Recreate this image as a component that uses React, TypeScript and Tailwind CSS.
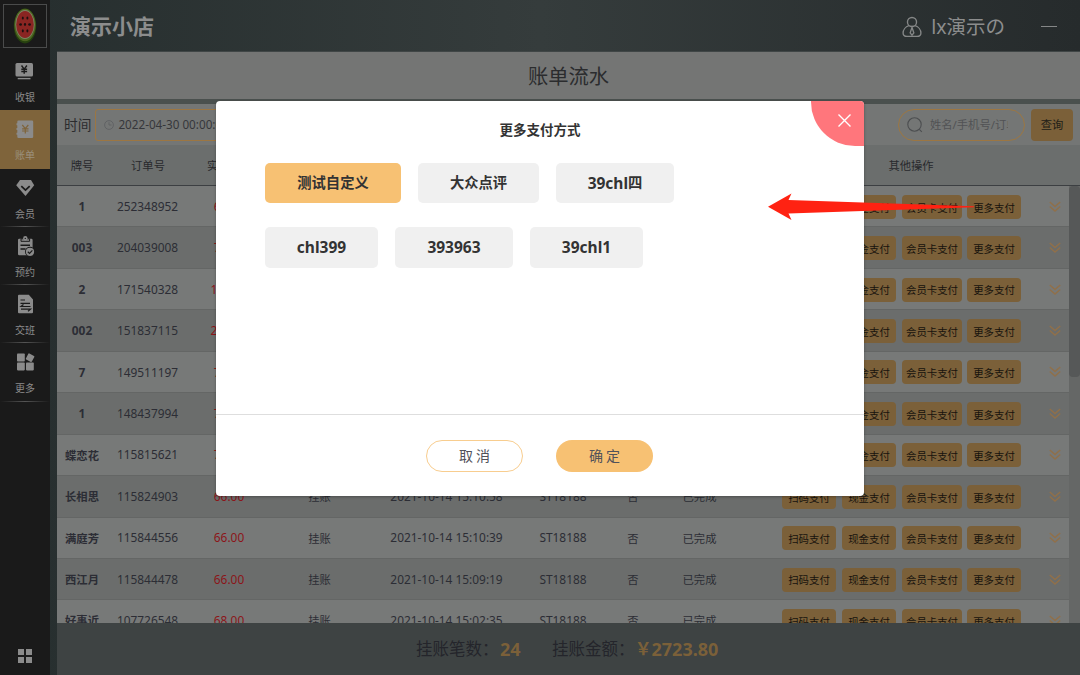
import type { ReactNode } from "react";

type Order = {
  tag: string;
  no: string;
  amount: string;
  time: string;
};

const orders: Order[] = [
  { tag: "1", no: "252348952", amount: "66.00", time: "2022-04-28 16:20:11" },
  { tag: "003", no: "204039008", amount: "78.00", time: "2022-01-18 11:02:45" },
  { tag: "2", no: "171540328", amount: "128.00", time: "2021-12-20 14:31:09" },
  { tag: "002", no: "151837115", amount: "238.00", time: "2021-11-26 10:12:52" },
  { tag: "7", no: "149511197", amount: "78.00", time: "2021-11-24 15:40:23" },
  { tag: "1", no: "148437994", amount: "78.00", time: "2021-11-23 09:27:36" },
  { tag: "蝶恋花", no: "115815621", amount: "78.00", time: "2021-10-14 15:11:20" },
  { tag: "长相思", no: "115824903", amount: "66.00", time: "2021-10-14 15:10:58" },
  { tag: "满庭芳", no: "115844556", amount: "66.00", time: "2021-10-14 15:10:39" },
  { tag: "西江月", no: "115844478", amount: "66.00", time: "2021-10-14 15:09:19" },
  { tag: "好事近", no: "107726548", amount: "68.00", time: "2021-10-14 15:02:35" },
];

const cols = "grid grid-cols-[50px_82px_79px_103px_151px_82px_58px_75px_1fr] items-center";

function Melon() {
  return (
    <svg width="24" height="36" viewBox="0 0 24 36">
      <ellipse cx="12" cy="18" rx="11.2" ry="17.5" fill="#25400f" />
      <ellipse cx="12" cy="17" rx="10.6" ry="16.3" fill="#4c6620" />
      <ellipse cx="12" cy="16.5" rx="9.6" ry="14.6" fill="#7c8365" />
      <ellipse cx="12" cy="16.5" rx="8.8" ry="13.4" fill="#8a2522" />
      <g fill="#1c1010">
        <ellipse cx="9.8" cy="10" rx="1" ry="1.6" />
        <ellipse cx="14.4" cy="10" rx="1" ry="1.6" />
        <ellipse cx="7.6" cy="16.5" rx="1.4" ry="1.3" />
        <ellipse cx="12" cy="16.5" rx="1.1" ry="1.4" />
        <ellipse cx="16.6" cy="16.5" rx="1.4" ry="1.3" />
        <ellipse cx="9.8" cy="22.8" rx="1" ry="1.6" />
        <ellipse cx="14.4" cy="22.8" rx="1" ry="1.6" />
      </g>
    </svg>
  );
}

const icons: Record<string, ReactNode> = {
  cash: (
    <svg width="20" height="20" viewBox="0 0 20 20">
      <rect x=".5" y="2" width="17.5" height="13.5" rx="1.5" fill="#8b8b8b" />
      <path d="M2.700 17.6h12.8" stroke="#8b8b8b" strokeWidth="1.4" />
      <path d="M6.500 4.5l2.7 3.6 2.7-3.6M9.200 8v4.8M6.300 8.3h5.8M6.300 10.5h5.8" stroke="#1a1a1a" strokeWidth="1.4" fill="none" />
    </svg>
  ),
  bill: (
    <svg width="20" height="20" viewBox="0 0 20 20">
      <path d="M3.5 1.5h13.500a1.2 1.2 0 0 1 1.2 1.2v15.100a1.2 1.2 0 0 1-1.2 1.2H3.500a1.2 1.2 0 0 1-1.2-1.2v-2.100h-.8v-2h.8v-2.6h-.8v-2h.8V6.300h-.8v-2h.8V2.7a1.2 1.2 0 0 1 1.2-1.2z" fill="#8b8b8b" />
      <path d="M7.300 6l3 3.6 3-3.6M10.300 9.600v4.8M7.100 9.800h6.4M7.100 12h6.4" stroke="#7f643b" strokeWidth="1.2" fill="none" />
    </svg>
  ),
  member: (
    <svg width="20" height="20" viewBox="0 0 20 20">
      <path d="M5 2h11l3.2 5.3L10.5 18 1.2 7.3z" fill="#8b8b8b" />
      <path d="M6.3 8.2l4.2 4 4.2-4" stroke="#1a1a1a" strokeWidth="1.7" fill="none" />
    </svg>
  ),
  book: (
    <svg width="20" height="20" viewBox="0 0 20 20">
      <path d="M4.3 2.8h12a1.3 1.3 0 0 1 1.3 1.3V18a1.3 1.3 0 0 1-1.3 1.3h-12A1.3 1.3 0 0 1 3 18V4.100a1.300 1.300 0 0 1 1.300-1.300z" fill="#8b8b8b" />
      <path d="M6 2.800h8.600v2.500H6z" fill="#8b8b8b" stroke="#1a1a1a" strokeWidth="1" />
      <circle cx="10.300" cy="2.200" r="2.200" fill="#8b8b8b" />
      <circle cx="10.300" cy="2.400" r=".7" fill="#1a1a1a" />
      <path d="M5.500 9.300h9.500M5.500 13h5" stroke="#1a1a1a" strokeWidth="1.500" />
      <circle cx="15" cy="15.800" r="5" fill="#1a1a1a" />
      <circle cx="15" cy="15.800" r="4.100" fill="#8b8b8b" />
      <path d="M12.800 15.800l1.700 1.600 2.900-3" stroke="#1a1a1a" strokeWidth="1.200" fill="none" />
    </svg>
  ),
  shift: (
    <svg width="20" height="20" viewBox="0 0 20 20">
      <path d="M4 .8h9.800l4.200 4.700v12.700a1 1 0 0 1-1 1H4a1 1 0 0 1-1-1V1.800a1 1 0 0 1 1-1z" fill="#8b8b8b" />
      <path d="M5.500 6h4.500M5.500 9.300h9.500M15.500 12.500H6l2.500-2M6 15.200h9.500l-2.500 2" stroke="#1a1a1a" strokeWidth="1.200" fill="none" />
    </svg>
  ),
  more: (
    <svg width="20" height="20" viewBox="0 0 20 20" fill="#8b8b8b">
      <rect x="2" y="1.500" width="7.800" height="8" rx=".8" />
      <rect x="2" y="10.600" width="7.800" height="7.800" rx=".8" />
      <rect x="11" y="10.600" width="7.800" height="7.800" rx=".8" />
      <rect x="11.700" y="2.300" width="6.800" height="6.800" rx=".8" transform="rotate(28 15.100 5.700)" />
    </svg>
  ),
};

const menu = [
  { icon: "cash", label: "收银" },
  { icon: "bill", label: "账单", active: true },
  { icon: "member", label: "会员" },
  { icon: "book", label: "预约" },
  { icon: "shift", label: "交班" },
  { icon: "more", label: "更多" },
];

function Sidebar() {
  return (
    <aside className="flex w-[50px] flex-col bg-[#1a1a1a]">
      <div className="ml-[3px] mt-1 flex h-11 w-11 items-center justify-center border border-[#4a4b4b]">
        <Melon />
      </div>
      <nav className="mt-1">
        {menu.map((m) => (
          <div
            key={m.label}
            className={`flex h-[58.300px] flex-col items-center ${m.active ? "bg-[#7f643b] text-[#9b907d]" : "text-[#8b8b8b]"}`}
          >
            <div className="mt-[9px] h-5">{icons[m.icon]}</div>
            <span className="mt-[11px] text-[10px] leading-[11px]">{m.label}</span>
            {!m.active && m.icon !== "cash" && (
              <div className="mt-auto h-px w-full bg-linear-to-r from-[#1a1a1a] via-[#555] to-[#1a1a1a]" />
            )}
          </div>
        ))}
      </nav>
      <div className="mb-3 ml-[18px] mt-auto grid w-[14px] grid-cols-2 gap-[2px]">
        {[0, 1, 2, 3].map((i) => (
          <span key={i} className="h-[6px] w-[6px] bg-[#8b8b8b]" />
        ))}
      </div>
    </aside>
  );
}

function PayButton({ children, className }: { children: ReactNode; className: string }) {
  return (
    <span className={`flex h-6 items-center justify-center rounded bg-[#7b6039] pt-[2px] text-[10.400px] text-[#17130d] ${className}`}>
      {children}
    </span>
  );
}

function Row({ order, even }: { order: Order; even: boolean }) {
  return (
    <div
      className={`${cols} h-[41.450px] shrink-0 border-b border-[#646665] pt-px text-center text-[11.900px] text-[#2c2d35] ${even ? "bg-[#6b6d6c]" : "bg-[#777978]"}`}
    >
      <b className={order.tag > "a" ? "text-[11.300px]" : ""}>{order.tag}</b>
      <span className="-ml-px">{order.no}</span>
      <span className="pl-px text-[#8c1519]">{order.amount}</span>
      <span className="text-[11.300px]">挂账</span>
      <span>{order.time}</span>
      <span>ST18188</span>
      <span className="text-[11.300px]">否</span>
      <span className="text-[11.300px]">已完成</span>
      <div className="flex items-center pl-[45px]">
        <PayButton className="w-[54px]">扫码支付</PayButton>
        <PayButton className="ml-[6px] w-[54px]">现金支付</PayButton>
        <PayButton className="ml-[6px] w-[60px]">会员卡支付</PayButton>
        <PayButton className="ml-[5px] w-[54px]">更多支付</PayButton>
        <svg className="ml-[28px]" width="12" height="12" viewBox="0 0 12 12" fill="none" stroke="#90704a" strokeWidth="1.500">
          <path d="M.8 1l5.200 4.600L11.200 1M.8 5.500L6 10.100l5.200-4.600" />
        </svg>
      </div>
    </div>
  );
}

function Option({ children, className }: { children: ReactNode; className: string }) {
  return (
    <div className={`flex items-center justify-center rounded-[5px] pt-px text-[15.500px] font-bold text-[#333] ${className}`}>
      {children}
    </div>
  );
}

function PayModal() {
  return (
    <div className="absolute left-[216px] top-[101px] flex h-[395px] w-[648px] flex-col rounded-sm bg-white shadow-[0_1px_3px_rgba(0,0,0,0.3)]">
      <div className="mt-[19px] text-center text-[13.500px] font-bold leading-5 text-[#333]">更多支付方式</div>
      <div className="ml-[49px] mt-[23px] flex h-10 gap-[17px]">
        <Option className="w-[136px] bg-[#f7c173]">
          <span className="text-[14.300px]">测试自定义</span>
        </Option>
        <Option className="w-[121px] bg-[#f0f0f0]">
          <span className="text-[14.300px]">大众点评</span>
        </Option>
        <Option className="w-[118px] bg-[#f0f0f0]">
          39chl<span className="text-[14.300px]">四</span>
        </Option>
      </div>
      <div className="ml-[49px] mt-[24px] flex h-[41px] gap-[17px]">
        <Option className="w-[113px] bg-[#f0f0f0]">chl399</Option>
        <Option className="w-[118px] bg-[#f0f0f0]">393963</Option>
        <Option className="w-[113px] bg-[#f0f0f0]">39chl1</Option>
      </div>
      <div className="mt-auto flex h-[82px] justify-center gap-[33px] border-t border-[#dedede] pt-[25px] pr-px text-sm tracking-[3px] text-[#51525a]">
        <button className="h-[32px] w-[97px] rounded-full border border-[#f8cd8f] pl-[3px]">取消</button>
        <button className="h-[32px] w-[97px] rounded-full bg-[#f7c173] pl-[3px]">确定</button>
      </div>
      <div className="absolute right-0 top-0 h-[45px] w-[53px] rounded-bl-[44px] rounded-tr-sm bg-[#ff767c]">
        <svg className="ml-[27px] mt-[13px]" width="13" height="13" viewBox="0 0 13 13" stroke="#fff" strokeWidth="1.400">
          <path d="M.5.5l12 12M12.500.5l-12 12" />
        </svg>
      </div>
    </div>
  );
}

export default function App() {
  return (
    <div className="relative flex h-[675px] w-[1080px] overflow-hidden bg-linear-to-r from-[#262e2e] via-[#353c3c] to-[#262b2c] font-['Noto_Sans','Noto_Sans_CJK_SC',sans-serif] leading-none">
      <Sidebar />
      <main className="ml-[7px] flex flex-1 flex-col">
        <header className="flex h-[52px] items-center border-b border-[#404646] pl-[13px] pt-[2px] text-[#8c8d8d]">
          <h1 className="text-[21px] font-bold">演示小店</h1>
          <svg className="ml-auto" width="20" height="22" viewBox="0 0 22 23" fill="none" stroke="#858787" strokeWidth="1.500">
            <circle cx="11" cy="6" r="5" />
            <path d="M7.500 10C4 11.200 1.200 14.700 1.200 18c0 2.500 1.500 3.800 4.300 3.800h11c2.800 0 4.300-1.300 4.300-3.800 0-3.300-2.800-6.800-6.300-8" />
            <path d="M11 12l-2 6 2 2.500 2-2.500z" />
          </svg>
          <span className="ml-[9px] text-[19.500px]">lx演示の</span>
          <span className="ml-[36px] mr-[23px] h-px w-4 bg-[#858787]" />
        </header>
        <div className="flex h-[47px] items-center justify-center bg-[#747574] pt-[2px] text-[20.300px] text-[#2b2c2e]">
          <span>账单流水</span>
        </div>
        <div className="h-[5px] bg-[#4a504e]" />
        <div className="flex h-[41px] items-center bg-[#747675] pl-[7px] pr-[7px]">
          <span className="text-[13.700px] text-[#2b2c2e]">时间</span>
          <div className="ml-[4px] flex h-8 w-[300px] items-center rounded-[3px] border border-[#9c7642] pl-[8px] pt-px text-[11.700px] text-[#36373b]">
            <svg className="mb-px mr-[4px]" width="10" height="10" viewBox="0 0 10 10" fill="none" stroke="#616365">
              <circle cx="5" cy="5" r="4.400" />
              <path d="M5 2.200V5h2.500" />
            </svg>
            2022-04-30 00:00:00
          </div>
          <div className="ml-auto flex h-8 w-[127px] items-center rounded-full border border-[#9c7642] pl-[8px] text-[11.300px] text-[#515254]">
            <svg width="16" height="16" viewBox="0 0 16 16" fill="none" stroke="#4c4e50" strokeWidth="1.100">
              <circle cx="7.500" cy="7.500" r="6.700" />
              <path d="M12.300 12.300l2.500 2.500" />
            </svg>
            <span className="ml-[7px] w-[78px] overflow-hidden whitespace-nowrap leading-4">姓名/手机号/订单</span>
          </div>
          <div className="ml-[6px] flex h-8 w-[42px] items-center justify-center rounded bg-[#7b6039] pt-px text-[11.300px] text-[#211d17]">查询</div>
        </div>
        <div className={`${cols} h-[41px] border-b border-[#3c3f42] bg-[#6b6e6d] pt-px text-center text-[11.300px] text-[#28292c]`}>
          <span>牌号</span>
          <span>订单号</span>
          <span className="pl-[2px]">实收金额</span>
          <span>支付方式</span>
          <span>下单时间</span>
          <span>操作人</span>
          <span>退款</span>
          <span>状态</span>
          <span className="pl-[5px]">其他操作</span>
        </div>
        <div className="flex h-[436.500px] overflow-hidden">
          <div className="flex flex-1 flex-col">
            {orders.map((o, i) => (
              <Row key={o.no} order={o} even={i % 2 === 1} />
            ))}
          </div>
          <div className="w-[11px] bg-[#656766]">
            <div className="h-[191px] rounded-[4px] bg-[#565858]" />
          </div>
        </div>
        <footer className="flex flex-1 items-center bg-[#3e4343] pl-[359px] text-[16.500px] text-[#24252b]">
          <span className="w-[84px] pt-px">挂账笔数：</span>
          <b className="w-[52px] text-[18px] text-[#7b6039]">24</b>
          <span className="w-[83px] pt-px">挂账金额：</span>
          <b className="text-[#7b6039]">￥</b>
          <b className="text-[18px] text-[#7b6039]">2723.80</b>
        </footer>
      </main>
      <PayModal />
      <svg className="absolute left-[768px] top-[193px]" width="208" height="28" viewBox="0 0 208 28" fill="#ff2212">
        <path d="M0 13.800L23.500.5 20.500 7 206 13.200v1L20.500 20.500l3 6.500z" />
      </svg>
    </div>
  );
}
